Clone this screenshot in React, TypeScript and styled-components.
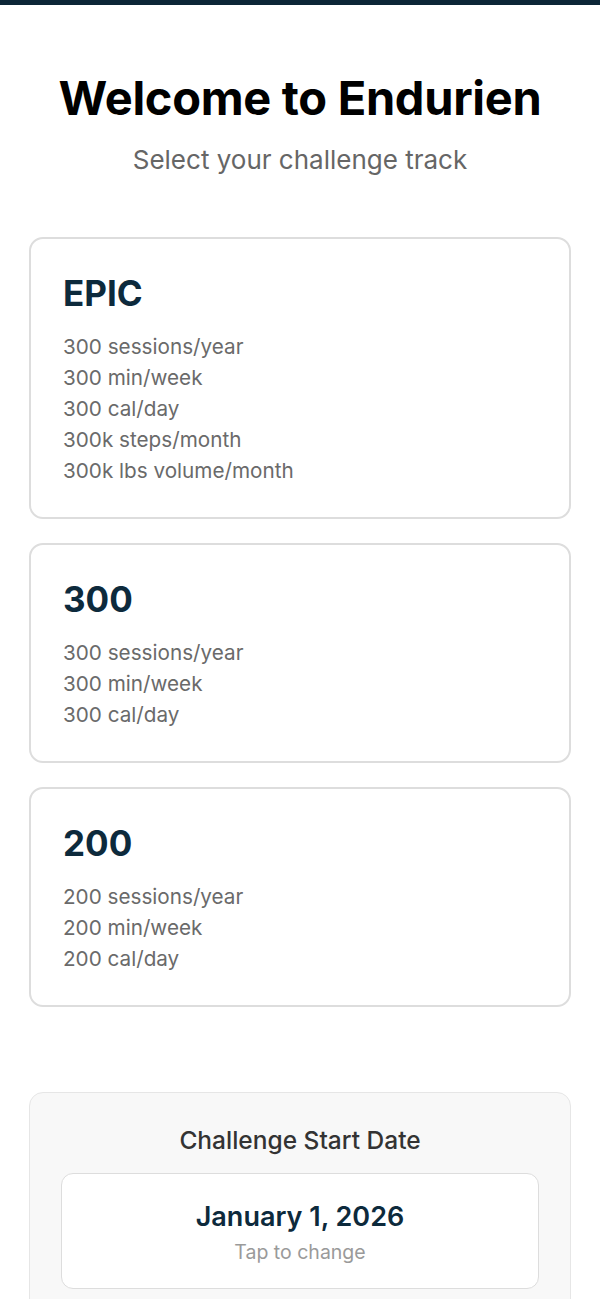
import React from "react";
import styled, { createGlobalStyle } from "styled-components";

const GlobalStyle = createGlobalStyle`
  html, body {
    margin: 0;
    padding: 0;
    background: #ffffff;
    font-family: Inter, "Noto Sans", "Liberation Sans", sans-serif;
  }
  * {
    box-sizing: border-box;
  }
`;

const TopBar = styled.div`
  height: 5px;
  background-color: #0c2637;
`;

const Screen = styled.div`
  display: flex;
  flex-direction: column;
  padding: 64px 29px 0;
`;

const Header = styled.header`
  display: flex;
  flex-direction: column;
  align-items: center;
  margin-bottom: 62px;
`;

const Title = styled.h1`
  margin: 0;
  font-size: 47px;
  line-height: 58px;
  font-weight: 700;
  color: #000;
  letter-spacing: -0.3px;
`;

const Subtitle = styled.p`
  margin: 18px 0 0;
  font-size: 26px;
  line-height: 30px;
  color: #666666;
`;

const TrackList = styled.div`
  display: flex;
  flex-direction: column;
  gap: 24px;
`;

const TrackCard = styled.button`
  display: flex;
  flex-direction: column;
  align-items: flex-start;
  text-align: left;
  font-family: inherit;
  background: #fff;
  border: 2px solid #dddddd;
  border-radius: 14px;
  padding: 33px 32px 31px;
  cursor: pointer;
`;

const TrackName = styled.h2`
  margin: 0 0 17px;
  font-size: 35px;
  line-height: 42px;
  font-weight: 700;
  color: #0d2a3c;
`;

const Goal = styled.div`
  font-size: 20.7px;
  line-height: 31px;
  color: #6a6a6a;
`;

const DatePanel = styled.section`
  margin-top: 85px;
  background: #f8f8f8;
  border: 1px solid #e6e6e6;
  border-radius: 14px;
  padding: 32px 31px 40px;
  display: flex;
  flex-direction: column;
  align-items: center;
`;

const DateLabel = styled.h3`
  margin: 0 0 18px;
  font-size: 24.5px;
  line-height: 30px;
  font-weight: 500;
  color: #333333;
`;

const DateButton = styled.button`
  width: 100%;
  background: #fff;
  border: 1px solid #dddddd;
  border-radius: 12px;
  padding: 26px 0 24px;
  font-family: inherit;
  display: flex;
  flex-direction: column;
  align-items: center;
  gap: 6px;
  cursor: pointer;
`;

const DateValue = styled.span`
  font-size: 27px;
  line-height: 34px;
  font-weight: 600;
  color: #0d2a3c;
`;

const DateHint = styled.span`
  font-size: 19.5px;
  line-height: 24px;
  color: #9a9a9a;
`;

type Track = { name: string; goals: string[] };

const tracks: Track[] = [
  {
    name: "EPIC",
    goals: [
      "300 sessions/year",
      "300 min/week",
      "300 cal/day",
      "300k steps/month",
      "300k lbs volume/month",
    ],
  },
  { name: "300", goals: ["300 sessions/year", "300 min/week", "300 cal/day"] },
  { name: "200", goals: ["200 sessions/year", "200 min/week", "200 cal/day"] },
];

const App = () => {
  return (
    <>
      <GlobalStyle />
      <TopBar />
      <Screen>
        <Header>
          <Title>Welcome to Endurien</Title>
          <Subtitle>Select your challenge track</Subtitle>
        </Header>
        <TrackList>
          {tracks.map((track) => (
            <TrackCard key={track.name} type="button">
              <TrackName>{track.name}</TrackName>
              {track.goals.map((goal) => (
                <Goal key={goal}>{goal}</Goal>
              ))}
            </TrackCard>
          ))}
        </TrackList>
        <DatePanel>
          <DateLabel>Challenge Start Date</DateLabel>
          <DateButton type="button">
            <DateValue>January 1, 2026</DateValue>
            <DateHint>Tap to change</DateHint>
          </DateButton>
        </DatePanel>
      </Screen>
    </>
  );
};

export default App;
